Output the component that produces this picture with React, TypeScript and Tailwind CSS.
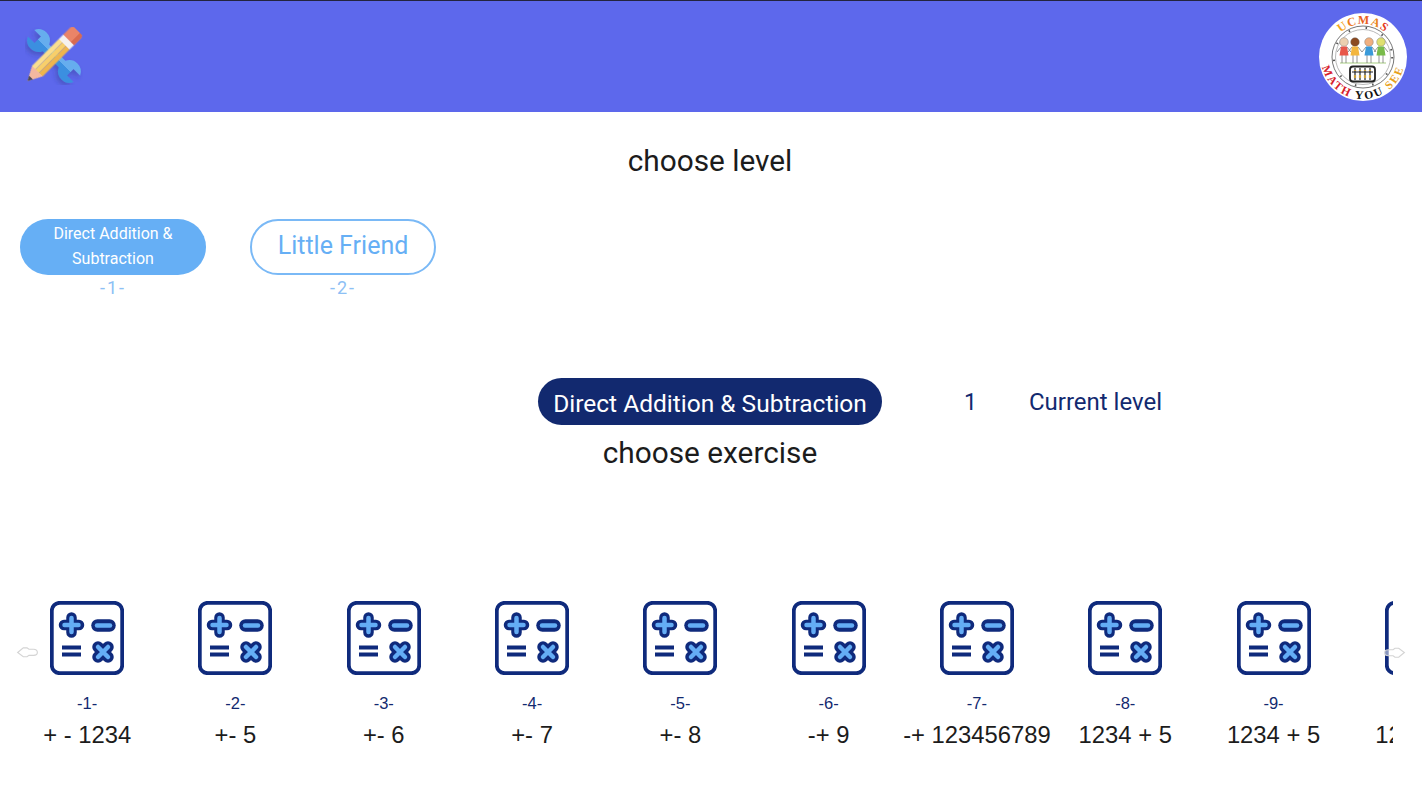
const ex = ["+ - 1234", "+- 5", "+- 6", "+- 7", "+- 8", "-+ 9", "-+ 123456789", "1234 + 5", "1234 + 5", "1234 + 5"];

function CalcIcon() {
  return (
    <svg width="74" height="74" viewBox="0 0 74 74" fill="none">
      <rect x="1.800" y="1.800" width="70.400" height="70.400" rx="8" fill="#fff" stroke="#0f2a7c" strokeWidth="3.800" />
      <path d="M21.500 16.500v15M14 24h15" stroke="#0f2a7c" strokeWidth="10.500" strokeLinecap="round" />
      <path d="M21.500 17v14M14.500 24h14" stroke="#64adf5" strokeWidth="4.500" strokeLinecap="round" />
      <path d="M47.500 24.500h12" stroke="#0f2a7c" strokeWidth="12.500" strokeLinecap="round" />
      <path d="M47 24.500h13" stroke="#64adf5" strokeWidth="4.500" strokeLinecap="round" />
      <path d="M12 46.500h19M12 53.500h19" stroke="#0f2a7c" strokeWidth="3.800" />
      <path d="M48 46l10 10M58 46L48 56" stroke="#0f2a7c" strokeWidth="11.500" strokeLinecap="round" />
      <path d="M48 46l10 10M58 46L48 56" stroke="#64adf5" strokeWidth="4.500" strokeLinecap="round" />
    </svg>
  );
}

function PencilWrench() {
  const w = "M-4 -28.100L-4 -20L4 -20L4 -28.100A10 10 0 0 1 4 -9.900L4 9.900A10 10 0 0 1 4 28.100L4 20L-4 20L-4 28.100A10 10 0 0 1 -4 9.900L-4 -9.900A10 10 0 0 1 -4 -28.100Z";
  return (
    <svg width="58" height="58" viewBox="0 0 58 58" className="-mt-[1px]">
      <defs>
        <linearGradient id="wr" x1="0" x2="1" y1="0" y2="0">
          <stop offset="0.500" stopColor="#3b8fe0" />
          <stop offset="0.500" stopColor="#66adee" />
        </linearGradient>
        <filter id="sh" x="-30%" y="-30%" width="160%" height="160%">
          <feDropShadow dx="-2" dy="3" stdDeviation="2.500" floodColor="#26307a" floodOpacity="0.35" />
        </filter>
        <filter id="so" x="-5%" y="-5%" width="110%" height="110%">
          <feGaussianBlur stdDeviation="0.350" />
        </filter>
      </defs>
      <g filter="url(#sh)">
        <path d={w} fill="url(#wr)" transform="translate(29 29) rotate(-45) scale(1.150)" />
      </g>
      <g filter="url(#so)" transform="translate(2.500 54) rotate(-45)">
        <path d="M0 0L14 -7.500L14 7.500Z" fill="#f4b8a0" />
        <path d="M0 0L5 -2.700L5 2.700Z" fill="#4b4b55" />
        <rect x="14" y="-7.500" width="38" height="5" fill="#fbdf8f" />
        <rect x="14" y="-2.500" width="38" height="5" fill="#f8cf6b" />
        <rect x="14" y="2.500" width="38" height="5" fill="#efb54e" />
        <rect x="52" y="-7.500" width="6" height="15" fill="#f5f1ee" />
        <path d="M58 -7.500h10a3 3 0 0 1 3 3v9a3 3 0 0 1 -3 3h-10z" fill="#ea8468" />
        <path d="M58 3h13v1.500a3 3 0 0 1 -3 3h-10z" fill="#d96b4f" />
      </g>
    </svg>
  );
}

function Logo() {
  const kids = [
    ["#e8574a", "#ecd0b0", 26],
    ["#f3b63e", "#8b4a20", 37],
    ["#3a9ad9", "#f0b080", 51],
    ["#79bb4a", "#dfe070", 63],
  ] as const;
  return (
    <svg width="90" height="90" viewBox="0 0 90 90">
      <circle cx="45" cy="45" r="44" fill="#fff" />
      <circle cx="45" cy="45" r="31" fill="none" stroke="#777" strokeWidth="1" />
      <circle cx="45" cy="45" r="27.500" fill="none" stroke="#999" strokeWidth="0.700" />
      <circle cx="45" cy="45" r="29.200" fill="none" stroke="#555" strokeWidth="2" strokeDasharray="1.500 16" />
      <path d="M22 51h46" stroke="#8fc060" strokeWidth="0.800" />
      {kids.map(([c, h, cx]) => (
        <g key={cx}>
          <path d={`M${cx - 2} 43v8M${cx + 2} 43v8M${cx - 3} 35l-4 5M${cx + 3} 35l4 5`} stroke="#777" strokeWidth="0.800" />
          <circle cx={cx} cy="30" r="4.300" fill={h} stroke="#666" strokeWidth="0.400" />
          <path d={`M${cx - 3} 34.500h6l1.500 9h-9z`} fill={c} />
        </g>
      ))}
      <rect x="32" y="54.500" width="25" height="15" rx="3" fill="#fff" stroke="#222" strokeWidth="1.800" />
      <path d="M37 56v12M42 56v12M47 56v12M52 56v12" stroke="#444" strokeWidth="1.400" />
      <path d="M34 60h21" stroke="#222" strokeWidth="1" />
      <path d="M37 58v1M42 58v1M47 58v1M52 58v1M37 63v3M42 63v3M47 63v3M52 63v3" stroke="#c9a040" strokeWidth="2.200" />
      <defs>
        <path id="top" d="M12 45a33 33 0 0 1 66 0" />
        <path id="bot" d="M3 45a42 42 0 0 0 84 0" />
      </defs>
      <text fontFamily="'Liberation Serif', serif" fontWeight="700" fontSize="12" letterSpacing="1">
        <textPath href="#top" startOffset="50%" textAnchor="middle">
          <tspan fill="#f4a71c">U</tspan>
          <tspan fill="#ee7b1c">C</tspan>
          <tspan fill="#e8601e">M</tspan>
          <tspan fill="#e8851c">A</tspan>
          <tspan fill="#e5391e">S</tspan>
        </textPath>
      </text>
      <text fontFamily="'Liberation Serif', serif" fontWeight="700" fontSize="11.500" letterSpacing="2">
        <textPath href="#bot" startOffset="50%" textAnchor="middle">
          <tspan fill="#d6202a">MATH </tspan>
          <tspan fill="#111">YOU </tspan>
          <tspan fill="#e7a11b">SEE</tspan>
        </textPath>
      </text>
    </svg>
  );
}

function Arrow({ className }: { className: string }) {
  return (
    <svg width="23" height="15" viewBox="0 0 24 16" fill="none" className={className}>
      <path d="M1.500 8l6-5h4l2 1.500h5c2.500 0 4 1.500 4 3.500s-1.500 3-4 3h-5l-2 1.500h-4z" stroke="#d4d4d4" strokeWidth="1.200" fill="#fff" fillOpacity="0.500" />
    </svg>
  );
}

export default function App() {
  return (
    <div className="relative h-[800px] w-[1422px] overflow-hidden bg-white font-['Roboto',sans-serif]">
      <header className="flex h-[112px] items-center justify-between border-t border-[#23243f] bg-[#5d68ec] pl-[25px] pr-[14px]">
        <PencilWrench />
        <Logo />
      </header>

      <h1 className="mt-[30px] pr-[2px] text-center text-[29.800px] leading-[38px] text-[#1c1c1c]">choose level</h1>

      <div className="mt-[39px] flex gap-[44px] pl-[20px]">
        <div className="w-[186px] text-center">
          <div className="flex h-[56px] items-center justify-center rounded-full bg-[#66aff5] pb-[2px] text-[16px] leading-[25px] text-white">
            <span>Direct Addition &amp;<br />Subtraction</span>
          </div>
          <div className="text-[18px] leading-[26px] tracking-[2px] text-[#8dc0f5]">-1-</div>
        </div>
        <div className="w-[186px] text-center">
          <div className="flex h-[56px] items-center justify-center rounded-full border-2 border-[#7ab9f6] pb-[2px] text-[25px] text-[#66aff5]">Little Friend</div>
          <div className="text-[18px] leading-[26px] tracking-[2px] text-[#8dc0f5]">-2-</div>
        </div>
      </div>

      <div className="mt-[77px] flex items-center pl-[538px]">
        <div className="flex h-[47px] w-[344px] items-center justify-center rounded-full bg-[#12296f] pt-[6px] text-[24.500px] text-white">Direct Addition &amp; Subtraction</div>
        <span className="ml-[82px] pt-[4px] text-[23px] text-[#12296f]">1</span>
        <span className="ml-[52px] text-[24px] text-[#12296f]">Current level</span>
      </div>

      <h2 className="mt-[9px] pr-[2px] text-center text-[29.800px] leading-[38px] text-[#1c1c1c]">choose exercise</h2>

      <div className="relative mt-[129px]">
        <div className="ml-[13px] flex w-[1380px] overflow-hidden">
          {ex.map((t, i) => (
            <div key={i} className="flex w-[148.300px] shrink-0 flex-col items-center">
              <CalcIcon />
              <div className="mt-[16px] text-[16.500px] leading-[24px] text-[#12296f] font-['Liberation_Sans',sans-serif]">-{i + 1}-</div>
              <div className="mt-[5px] whitespace-nowrap text-[23.800px] leading-[30px] text-[#1c1c1c] font-['Liberation_Sans',sans-serif]">{t}</div>
            </div>
          ))}
        </div>
        <Arrow className="absolute left-[16px] top-[44px]" />
        <Arrow className="absolute right-[16px] top-[44px] rotate-180" />
      </div>
    </div>
  );
}
